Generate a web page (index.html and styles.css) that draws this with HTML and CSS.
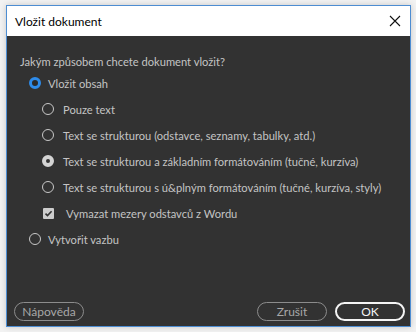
FILE: index.html
```html
<!DOCTYPE html>
<html lang="cs">
<head>
<meta charset="utf-8">
<title>Vložit dokument</title>
<link rel="stylesheet" href="styles.css">
</head>
<body>
<div class="window">
  <div class="titlebar">
    <span class="title">Vložit dokument</span>
    <svg class="close" width="12" height="12" viewBox="0 0 12 12"><path d="M1 1L11 11M11 1L1 11" stroke="#111" stroke-width="1.1" fill="none"/></svg>
  </div>
  <div class="content">
    <div class="question">Jakým způsobem chcete dokument vložit?</div>
    <div class="row lvl1"><span class="radio radio-on"></span><span class="label">Vložit obsah</span></div>
    <div class="row lvl2"><span class="radio"></span><span class="label">Pouze text</span></div>
    <div class="row lvl2"><span class="radio"></span><span class="label">Text se strukturou (odstavce, seznamy, tabulky, atd.)</span></div>
    <div class="row lvl2"><span class="radio radio-dim"></span><span class="label">Text se strukturou a základním formátováním (tučné, kurzíva)</span></div>
    <div class="row lvl2"><span class="radio"></span><span class="label">Text se strukturou s ú&amp;plným formátováním (tučné, kurzíva, styly)</span></div>
    <div class="row lvl2 chkrow"><span class="check"><svg width="11" height="11" viewBox="0 0 11 11"><path d="M2.5 5.6L4.5 7.6L8.6 3.3" stroke="#333" stroke-width="1.6" fill="none"/></svg></span><span class="label">Vymazat mezery odstavců z Wordu</span></div>
    <div class="row lvl1"><span class="radio"></span><span class="label">Vytvořit vazbu</span></div>
    <div class="footer">
      <button class="btn">Nápověda</button>
      <span class="spacer"></span>
      <button class="btn">Zrušit</button>
      <button class="btn btn-primary">OK</button>
    </div>
  </div>
</div>
</body>
</html>
```
FILE: styles.css
```css
html, body {
  margin: 0;
  padding: 0;
  background: #f2f2f2;
}
body {
  font-family: Lato, "Noto Sans", sans-serif;
  width: 416px;
  height: 332px;
  overflow: hidden;
}
.window {
  box-sizing: border-box;
  width: 405px;
  height: 322px;
  margin: 5px 0 0 6px;
  border: 1px solid #4d8dd2;
  display: flex;
  flex-direction: column;
  box-shadow: 0 0 6px rgba(0, 0, 0, 0.18);
}
.titlebar {
  height: 30px;
  background: #ffffff;
  display: flex;
  align-items: center;
  padding: 0 8px 0 8px;
}
.title {
  font-size: 12px;
  color: #000;
  flex: 1;
}
.close {
  display: block;
  margin-right: 1px;
}
.content {
  flex: 1;
  background: #323232;
  display: flex;
  flex-direction: column;
  padding-top: 18px;
  color: #c4c4c4;
  font-size: 11.15px;
}
.question {
  line-height: 16px;
  padding-left: 13px;
  white-space: nowrap;
}
.row {
  height: 26px;
  display: flex;
  align-items: center;
  white-space: nowrap;
}
.lvl1 { padding-left: 22px; }
.lvl2 { padding-left: 35px; }
.radio {
  box-sizing: border-box;
  width: 12px;
  height: 12px;
  border-radius: 50%;
  border: 1px solid #c8c8c8;
  margin-right: 7px;
  flex: none;
}
.lvl2 .radio { margin-right: 9px; }
.radio-on {
  border: 3px solid #2e8ceb;
  background: #2a2a2a;
}
.radio-dim {
  border: 4px solid #d4d4d4;
  background: #333;
}
.check {
  box-sizing: border-box;
  width: 11px;
  height: 11px;
  background: #cdcdcd;
  border-radius: 1px;
  margin: 0 12px 0 1px;
  display: flex;
  flex: none;
}
.check svg { display: block; }
.footer {
  margin-top: auto;
  display: flex;
  align-items: center;
  padding: 0 5px 5px 7px;
}
.spacer { flex: 1; }
.btn {
  box-sizing: border-box;
  width: 70px;
  height: 19px;
  border-radius: 10px;
  border: 1px solid #8c8c8c;
  background: transparent;
  color: #a8a8a8;
  font-family: Lato, "Noto Sans", sans-serif;
  font-size: 12px;
  padding: 0;
  line-height: 16px;
}
.btn-primary {
  margin-left: 8px;
  border: 2px solid #f4f4f4;
  color: #f4f4f4;
}
```
